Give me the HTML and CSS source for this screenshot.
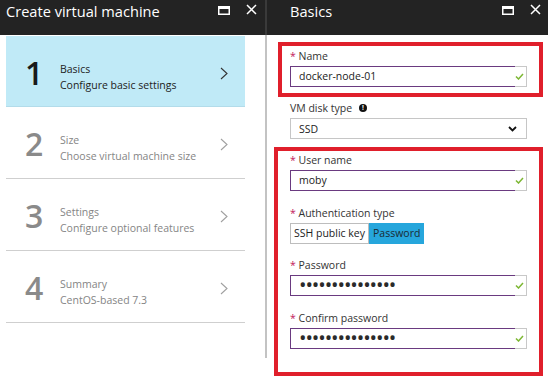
FILE: index.html
```html
<!DOCTYPE html>
<html lang="en">
<head>
<meta charset="utf-8">
<title>Create virtual machine</title>
<link rel="stylesheet" href="styles.css">
</head>
<body>
<div class="app">
  <section class="blade blade-left">
    <header class="blade-header">
      <h1 class="blade-title">Create virtual machine</h1>
      <div class="blade-actions">
        <svg class="icon-max" width="12" height="9" viewBox="0 0 12 9"><rect x="0.75" y="0.75" width="10.5" height="7.5" fill="none" stroke="#fff" stroke-width="1.5"/><rect x="0" y="0" width="12" height="3" fill="#fff"/></svg>
        <svg class="icon-close" width="11" height="11" viewBox="0 0 11 11"><path d="M1 1L10 10M10 1L1 10" stroke="#fff" stroke-width="1.5" fill="none"/></svg>
      </div>
    </header>
    <div class="steps">
      <div class="step step-active">
        <span class="step-num">1</span>
        <div class="step-text"><div class="step-title">Basics</div><div class="step-sub">Configure basic settings</div></div>
        <svg class="chev" width="8" height="13" viewBox="0 0 8 13"><path d="M1 1L7 6.5L1 12" fill="none" stroke="currentColor" stroke-width="1.1"/></svg>
      </div>
      <div class="step">
        <span class="step-num">2</span>
        <div class="step-text"><div class="step-title">Size</div><div class="step-sub">Choose virtual machine size</div></div>
        <svg class="chev" width="8" height="13" viewBox="0 0 8 13"><path d="M1 1L7 6.5L1 12" fill="none" stroke="currentColor" stroke-width="1.1"/></svg>
      </div>
      <div class="step">
        <span class="step-num">3</span>
        <div class="step-text"><div class="step-title">Settings</div><div class="step-sub">Configure optional features</div></div>
        <svg class="chev" width="8" height="13" viewBox="0 0 8 13"><path d="M1 1L7 6.5L1 12" fill="none" stroke="currentColor" stroke-width="1.1"/></svg>
      </div>
      <div class="step">
        <span class="step-num">4</span>
        <div class="step-text"><div class="step-title">Summary</div><div class="step-sub">CentOS-based 7.3</div></div>
        <svg class="chev" width="8" height="13" viewBox="0 0 8 13"><path d="M1 1L7 6.5L1 12" fill="none" stroke="currentColor" stroke-width="1.1"/></svg>
      </div>
    </div>
  </section>

  <div class="splitter"><div class="splitter-top"></div><div class="splitter-line"></div></div>

  <section class="blade blade-right">
    <header class="blade-header header-right">
      <h1 class="blade-title">Basics</h1>
      <div class="blade-actions">
        <svg class="icon-max" width="12" height="9" viewBox="0 0 12 9"><rect x="0.75" y="0.75" width="10.5" height="7.5" fill="none" stroke="#fff" stroke-width="1.5"/><rect x="0" y="0" width="12" height="3" fill="#fff"/></svg>
        <svg class="icon-close" width="11" height="11" viewBox="0 0 11 11"><path d="M1 1L10 10M10 1L1 10" stroke="#fff" stroke-width="1.5" fill="none"/></svg>
      </div>
    </header>
    <div class="form">
      <div class="callout callout-name">
        <div class="field">
          <label class="label"><span class="req">*</span> Name</label>
          <div class="input-wrap">
            <div class="input">docker-node-01</div>
            <div class="valid"><svg width="9" height="7" viewBox="0 0 9 7"><path d="M1 3.5L3.5 6L8 1" fill="none" stroke="#7db733" stroke-width="1.5"/></svg></div>
          </div>
        </div>
      </div>

      <div class="field field-disk">
        <label class="label">VM disk type <span class="info">!</span></label>
        <div class="select">SSD<svg class="select-chev" width="9" height="6" viewBox="0 0 9 6"><path d="M1 1L4.5 4.5L8 1" fill="none" stroke="#111" stroke-width="1.8"/></svg></div>
      </div>

      <div class="callout callout-account">
        <div class="field">
          <label class="label"><span class="req">*</span> User name</label>
          <div class="input-wrap">
            <div class="input">moby</div>
            <div class="valid"><svg width="9" height="7" viewBox="0 0 9 7"><path d="M1 3.5L3.5 6L8 1" fill="none" stroke="#7db733" stroke-width="1.5"/></svg></div>
          </div>
        </div>
        <div class="field">
          <label class="label"><span class="req">*</span> Authentication type</label>
          <div class="toggle">
            <span class="toggle-opt">SSH public key</span><span class="toggle-opt toggle-on">Password</span>
          </div>
        </div>
        <div class="field">
          <label class="label"><span class="req">*</span> Password</label>
          <div class="input-wrap">
            <div class="input input-pw">•••••••••••••••</div>
            <div class="valid"><svg width="9" height="7" viewBox="0 0 9 7"><path d="M1 3.5L3.5 6L8 1" fill="none" stroke="#7db733" stroke-width="1.5"/></svg></div>
          </div>
        </div>
        <div class="field">
          <label class="label"><span class="req">*</span> Confirm password</label>
          <div class="input-wrap">
            <div class="input input-pw">•••••••••••••••</div>
            <div class="valid"><svg width="9" height="7" viewBox="0 0 9 7"><path d="M1 3.5L3.5 6L8 1" fill="none" stroke="#7db733" stroke-width="1.5"/></svg></div>
          </div>
        </div>
      </div>
    </div>
  </section>
</div>
</body>
</html>
```

FILE: styles.css
```css
* { box-sizing: border-box; }
html, body { margin: 0; padding: 0; }
body {
  width: 548px;
  height: 382px;
  overflow: hidden;
  background: #fff;
  font-family: "Open Sans", "Noto Sans", sans-serif;
  color: #333;
}
.app { display: flex; height: 382px; }

.blade { display: flex; flex-direction: column; }
.blade-left { width: 265px; }
.blade-right { flex: 1; }

.blade-header {
  height: 35px;
  background: #232323;
  color: #fff;
  display: flex;
  align-items: flex-start;
  justify-content: space-between;
  padding: 0 8px 0 6px;
}
.header-right { padding: 0 7px 0 23px; }
.blade-title {
  margin: 0;
  font-size: 14.6px;
  font-weight: 400;
  line-height: 20px;
  padding-top: 1px;
}
.blade-actions {
  display: flex;
  align-items: center;
  gap: 16px;
  padding-top: 4px;
}
.icon-max { margin-top: 1px; }

.splitter { width: 2px; display: flex; flex-direction: column; }
.splitter-top { height: 35px; background: #3a3a3a; }
.splitter-line { height: 323px; background: #c3c3c3; }

/* steps */
.steps { padding: 1px 20px 0 6px; display: flex; flex-direction: column; }
.step {
  display: flex;
  align-items: flex-start;
  height: 72px;
  padding: 21px 17px 0 19px;
  border-bottom: 1px solid #cfcfcf;
  color: #858585;
}
.step-active {
  height: 71px;
  background: #c0eaf7;
  border-bottom: 1px solid #b3dcea;
  color: #222;
}
.step-num {
  width: 35px;
  font-size: 32px;
  line-height: 32px;
  font-weight: 600;
  color: #8a8a8a;
}
.step-active .step-num { color: #1a1a1a; }
.step-text {
  flex: 1;
  margin-top: 4px;
  font-size: 10.5px;
  line-height: 16px;
}
.step-title, .step-sub { white-space: nowrap; }
.chev { margin-top: 10px; color: #a0a0a0; }
.step-active .chev { color: #333; }

/* form */
.form { display: flex; flex-direction: column; padding-top: 7px; }
.callout { border: 4px solid #e01f2b; display: flex; flex-direction: column; }
.callout-name { margin: 0 5px 0 11px; padding: 2px 12px 6px 8px; }
.callout-account { margin: 8px 5px 0 7px; padding: 1px 12px 23px 12px; gap: 13.5px; }
.field-disk { margin: 3px 21px 0 23px; }

.label {
  display: flex;
  align-items: center;
  height: 16px;
  font-size: 10.5px;
  line-height: 16px;
  color: #333;
  white-space: pre;
}
.req { color: #c2185b; }
.info {
  display: inline-flex;
  align-items: center;
  justify-content: center;
  width: 8px;
  height: 8px;
  margin-left: 4px;
  border-radius: 50%;
  background: #111;
  color: #fff;
  font-size: 6.5px;
  font-weight: 700;
  line-height: 1;
}

.input-wrap { display: flex; height: 21px; margin-top: 2px; }
.input {
  flex: 1;
  border: 1px solid #6a3a80;
  border-right: none;
  padding-left: 8px;
  font-size: 10.5px;
  line-height: 19px;
  color: #222;
  white-space: nowrap;
}
.input-pw {
  font-size: 20px;
  letter-spacing: -1.1px;
  line-height: 18px;
  color: #2a2a2a;
}
.valid {
  width: 12px;
  border: 1px solid #c8c8c8;
  border-left: none;
  display: flex;
  align-items: center;
}

.select {
  display: flex;
  align-items: center;
  justify-content: space-between;
  height: 21px;
  margin-top: 2px;
  border: 1px solid #c6c6c6;
  padding: 0 9px 0 8px;
  font-size: 10.5px;
  color: #222;
}

.toggle { display: flex; height: 21px; margin-top: 2px; }
.toggle-opt {
  display: flex;
  align-items: center;
  padding: 0 3px;
  border: 1px solid #bdbdbd;
  font-size: 10.5px;
  color: #222;
  white-space: nowrap;
}
.toggle-on {
  background: #26a6dc;
  border-color: #26a6dc;
  color: #1b2a33;
}
```
